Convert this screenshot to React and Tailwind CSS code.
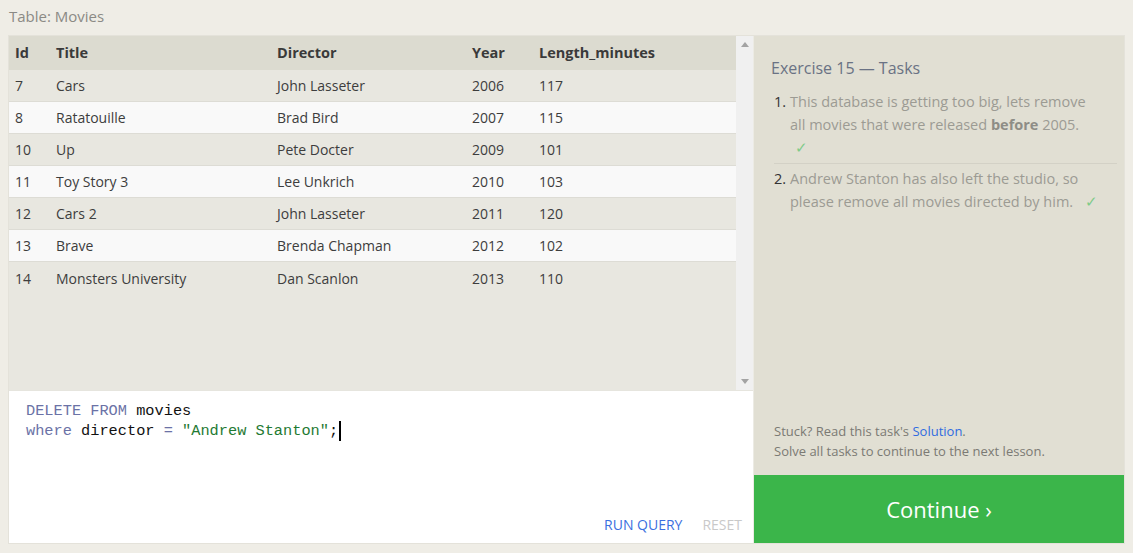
import React from 'react';

const rows = [
  [7, 'Cars', 'John Lasseter', 2006, 117],
  [8, 'Ratatouille', 'Brad Bird', 2007, 115],
  [10, 'Up', 'Pete Docter', 2009, 101],
  [11, 'Toy Story 3', 'Lee Unkrich', 2010, 103],
  [12, 'Cars 2', 'John Lasseter', 2011, 120],
  [13, 'Brave', 'Brenda Chapman', 2012, 102],
  [14, 'Monsters University', 'Dan Scanlon', 2013, 110],
];

const cols = 'grid grid-cols-[41px_221px_195px_67px_1fr]';
const sans = { fontFamily: '"Open Sans", "Noto Sans", sans-serif' };

export default function App() {
  return (
    <div className="w-[1133px] h-[553px] bg-[#efede6] text-[#333]" style={sans}>
      <div className="h-[35px] px-[9px] pt-[5px] text-[15px] text-[#8b8a85]">Table: Movies</div>

      <div className="mx-[8px] h-[509px] flex border border-[#e4e2da]">
        {/* left side: table + editor */}
        <div className="w-[744px] flex flex-col">
          <div className="h-[354px] flex bg-[#e8e7e0]">
            <div className="flex-1">
              <div className={`${cols} h-[34px] items-center bg-[#dcdbd0] font-bold text-[14.5px] text-[#3a3a3a]`}>
                <div className="pl-[6px]">Id</div>
                <div className="pl-[6px]">Title</div>
                <div className="pl-[6px]">Director</div>
                <div className="pl-[6px]">Year</div>
                <div className="pl-[6px]">Length_minutes</div>
              </div>
              {rows.map((r, i) => (
                <div
                  key={r[0]}
                  className={`${cols} h-[32px] items-center text-[14px] text-[#3d3d3d] ${
                    i % 2 ? 'bg-[#f9f9f9]' : 'bg-[#e8e7e0]'
                  } ${i < rows.length - 1 ? 'border-b border-[#dddcd5]' : ''}`}
                >
                  {r.map((c, j) => (
                    <div key={j} className="pl-[6px]">{c}</div>
                  ))}
                </div>
              ))}
            </div>
            <div className="w-[17px] bg-[#f0f0f0] flex flex-col items-center justify-between py-[6px]">
              <svg width="8" height="5" viewBox="0 0 8 5"><path d="M4 0 L8 5 L0 5 Z" fill="#a3a3a3" /></svg>
              <svg width="8" height="5" viewBox="0 0 8 5"><path d="M0 0 L8 0 L4 5 Z" fill="#a3a3a3" /></svg>
            </div>
          </div>

          <div className="flex-1 bg-white border-t border-[#e6e5de] flex flex-col">
            <div
              className="pl-[17px] pt-[10px] text-[15.3px] leading-[20px]"
              style={{ fontFamily: '"Liberation Mono", "DejaVu Sans Mono", monospace' }}
            >
              <div>
                <span className="text-[#6b72a6]">DELETE FROM</span> <span className="text-[#111]">movies</span>
              </div>
              <div className="flex items-center">
                <span className="text-[#6b72a6]">where</span>
                <span className="text-[#111]">&nbsp;director&nbsp;</span>
                <span className="text-[#6b72a6]">=</span>
                <span>&nbsp;</span>
                <span className="text-[#1f7a33]">"Andrew Stanton"</span>
                <span className="text-[#111]">;</span>
                <span className="inline-block w-[2px] h-[20px] bg-black ml-[1px]" />
              </div>
            </div>
            <div className="mt-auto flex justify-end gap-[20px] pr-[11px] pb-[8px] text-[14px]">
              <span className="text-[#3b6fe0]">RUN QUERY</span>
              <span className="text-[#c9c9c9]">RESET</span>
            </div>
          </div>
        </div>

        {/* right side: tasks */}
        <div className="flex-1 flex flex-col bg-[#e1dfd3] border-l border-[#ecebe4]">
          <div className="pl-[17px] pr-[7px] pt-[20px]">
            <div className="text-[16px] text-[#6a7284]">Exercise 15 — Tasks</div>
            <ol className="mt-[10px] text-[14.5px] leading-[23px] text-[#9c9b93]">
              <li className="flex pb-[4px] border-b border-[#d3d1c6] ml-[3px]">
                <span className="w-[16px] text-[#333]">1.</span>
                <span className="max-w-[304px]">
                  This database is getting too big, lets remove all movies that were released{' '}
                  <b className="text-[#8e8d86]">before</b> 2005.
                  <br />
                  <span className="ml-[5px] text-[#7fcb89]">✓</span>
                </span>
              </li>
              <li className="flex pt-[3px] ml-[3px]">
                <span className="w-[16px] text-[#333]">2.</span>
                <span className="max-w-[322px]">
                  Andrew Stanton has also left the studio, so please remove all movies directed by{' '}
                  <span className="whitespace-nowrap">
                    him.<span className="ml-[12px] text-[#7fcb89]">✓</span>
                  </span>
                </span>
              </li>
            </ol>
          </div>
          <div className="mt-auto px-[20px] pb-[14px] text-[13px] leading-[20px] text-[#7b7a74]">
            <div>
              Stuck? Read this task's <span className="text-[#2f6be0]">Solution</span>.
            </div>
            <div>Solve all tasks to continue to the next lesson.</div>
          </div>
          <div className="h-[68px] bg-[#3bb54a] flex items-center justify-center text-white text-[22px]">
            Continue ›
          </div>
        </div>
      </div>
    </div>
  );
}
